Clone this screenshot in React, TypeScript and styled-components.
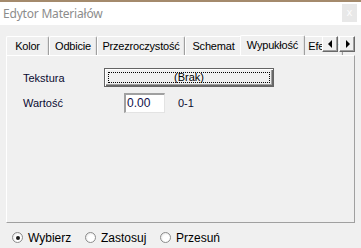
import React from "react";
import styled, { createGlobalStyle } from "styled-components";

const GlobalStyle = createGlobalStyle`
  html, body {
    margin: 0;
    padding: 0;
    background: #f0f0f0;
  }
  body {
    font-family: "Liberation Sans", Arial, sans-serif;
    font-size: 11px;
    color: #000;
  }
`;

const Window = styled.div`
  width: 361px;
  height: 248px;
  display: flex;
  flex-direction: column;
  overflow: hidden;
  background: #f0f0f0;
`;

const DesktopEdge = styled.div`
  height: 2px;
  background: #a48a6c;
`;

const TitleBar = styled.div`
  height: 23px;
  background: #fff;
  display: flex;
  align-items: center;
  justify-content: space-between;
  padding: 0 4px 0 3px;
`;

const Title = styled.span`
  font-family: "Noto Sans", "Open Sans", sans-serif;
  font-size: 12px;
  color: #8c8c8c;
  letter-spacing: -0.2px;
`;

const CloseButton = styled.div`
  width: 15px;
  height: 18px;
  margin-top: -2px;
  background: #e8e8e8;
  color: #fcfcfc;
  font-family: "DejaVu Sans", sans-serif;
  font-size: 10px;
  display: flex;
  align-items: center;
  justify-content: center;
`;

const Body = styled.div`
  flex: 1;
  display: flex;
  flex-direction: column;
  padding: 9px 6px 0 6px;
`;

const TabStrip = styled.div`
  height: 21px;
  display: flex;
  align-items: flex-end;
  position: relative;
  overflow: hidden;
`;

const Tab = styled.div<{ $active?: boolean; $width: number }>`
  box-sizing: border-box;
  width: ${({ $width }) => $width}px;
  flex: none;
  height: ${({ $active }) => ($active ? 21 : 19)}px;
  margin: ${({ $active }) => ($active ? "0 -2px -1px -2px" : "0")};
  position: relative;
  z-index: ${({ $active }) => ($active ? 2 : 1)};
  border-top: 1px solid #fff;
  border-left: 1px solid #fff;
  border-right: 1px solid #a0a0a0;
  box-shadow: inset -1px 0 0 #e3e3e3;
  border-radius: 2px 2px 0 0;
  background: #f0f0f0;
  padding-top: 3px;
  text-align: center;
  letter-spacing: -0.2px;
  white-space: nowrap;
  overflow: hidden;
`;

const Scroller = styled.div`
  position: absolute;
  right: 0;
  top: 2px;
  display: flex;
  gap: 1px;
  z-index: 3;
`;

const ScrollButton = styled.div`
  box-sizing: border-box;
  width: 16px;
  height: 16px;
  background: #f0f0f0;
  border-top: 1px solid #fff;
  border-left: 1px solid #fff;
  border-right: 1px solid #696969;
  border-bottom: 1px solid #696969;
  box-shadow: inset -1px -1px 0 #a0a0a0;
  display: flex;
  align-items: center;
  justify-content: center;
`;

const Panel = styled.div`
  box-sizing: border-box;
  width: 349px;
  height: 168px;
  border-top: 1px solid #fff;
  border-left: 1px solid #fff;
  border-right: 1px solid #a0a0a0;
  border-bottom: 1px solid #a0a0a0;
  padding: 12px 0 0 16px;
  display: flex;
  flex-direction: column;
  gap: 6px;
`;

const Row = styled.div`
  display: flex;
  align-items: center;
`;

const Label = styled.span<{ $width: number }>`
  width: ${({ $width }) => $width}px;
  flex: none;
  color: #0a0a30;
`;

const TextureButton = styled.div`
  box-sizing: border-box;
  width: 170px;
  height: 19px;
  border: 1px solid #646464;
  box-shadow: inset 1px 1px 0 #fff, inset -1px -1px 0 #696969, inset -2px -2px 0 #a0a0a0;
  background: #f0f0f0;
  padding: 3px;
  display: flex;
`;

const FocusRect = styled.div`
  flex: 1;
  border: 1px dotted #000;
  display: flex;
  align-items: center;
  justify-content: center;
  line-height: 1;
`;

const ValueInput = styled.div`
  box-sizing: border-box;
  width: 41px;
  height: 20px;
  background: #fff;
  border-top: 2px solid #a0a0a0;
  border-left: 2px solid #a0a0a0;
  border-right: 1px solid #e3e3e3;
  border-bottom: 1px solid #e3e3e3;
  padding: 1px 0 0 1px;
  font-size: 12px;
  color: #10104a;
`;

const Range = styled.span`
  margin-left: 13px;
  color: #0a0a30;
`;

const RadioRow = styled.div`
  flex: 1;
  display: flex;
  align-items: center;
  padding: 4px 0 0 6px;
`;

const RadioItem = styled.div<{ $width: number }>`
  width: ${({ $width }) => $width}px;
  display: flex;
  align-items: center;
  gap: 5px;
  font-size: 12px;
`;

const RadioCircle = styled.span<{ $checked?: boolean }>`
  box-sizing: border-box;
  width: 11px;
  height: 11px;
  border-radius: 50%;
  border: 1px solid #8c8c8c;
  background: radial-gradient(circle at 60% 60%, #ffffff 40%, #dcdcdc 100%);
  display: flex;
  align-items: center;
  justify-content: center;
  &::after {
    content: "";
    width: 4px;
    height: 4px;
    border-radius: 50%;
    background: ${({ $checked }) => ($checked ? "#1a1a1a" : "transparent")};
  }
`;

const tabs = [
  { label: "Kolor", width: 43 },
  { label: "Odbicie", width: 48 },
  { label: "Przezroczystość", width: 88 },
  { label: "Schemat", width: 57 },
  { label: "Wypukłość", width: 65, active: true },
  { label: "Efekty", width: 40 },
];

const Arrow = ({ dir }: { dir: "left" | "right" }) => (
  <svg width="5" height="8" viewBox="0 0 5 8">
    {dir === "left" ? <path d="M4 0 L0 4 L4 8 Z" fill="#000" /> : <path d="M1 0 L5 4 L1 8 Z" fill="#000" />}
  </svg>
);

export default function App() {
  return (
    <>
      <GlobalStyle />
      <Window>
        <DesktopEdge />
        <TitleBar>
          <Title>Edytor Materiałów</Title>
          <CloseButton>x</CloseButton>
        </TitleBar>
        <Body>
          <TabStrip>
            {tabs.map((t) => (
              <Tab key={t.label} $active={t.active} $width={t.width}>
                {t.label}
              </Tab>
            ))}
            <Scroller>
              <ScrollButton>
                <Arrow dir="left" />
              </ScrollButton>
              <ScrollButton>
                <Arrow dir="right" />
              </ScrollButton>
            </Scroller>
          </TabStrip>
          <Panel>
            <Row>
              <Label $width={81}>Tekstura</Label>
              <TextureButton>
                <FocusRect>(Brak)</FocusRect>
              </TextureButton>
            </Row>
            <Row>
              <Label $width={101}>Wartość</Label>
              <ValueInput>0.00</ValueInput>
              <Range>0-1</Range>
            </Row>
          </Panel>
          <RadioRow>
            <RadioItem $width={73}>
              <RadioCircle $checked />
              Wybierz
            </RadioItem>
            <RadioItem $width={75}>
              <RadioCircle />
              Zastosuj
            </RadioItem>
            <RadioItem $width={80}>
              <RadioCircle />
              Przesuń
            </RadioItem>
          </RadioRow>
        </Body>
      </Window>
    </>
  );
}
